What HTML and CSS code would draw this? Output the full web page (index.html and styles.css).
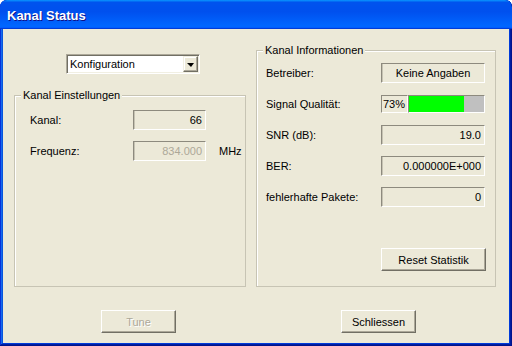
FILE: index.html
```html
<!DOCTYPE html>
<html>
<head>
<meta charset="utf-8">
<title>Kanal Status</title>
<link rel="stylesheet" href="styles.css">
</head>
<body>
<div class="window">
  <div class="titlebar"><span class="title">Kanal Status</span></div>
  <div class="client">
    <div class="main">
      <div class="col-left">
        <div class="combo">
          <span class="combo-text">Konfiguration</span>
          <span class="combo-btn"><span class="arrow"></span></span>
        </div>
        <fieldset class="group">
          <legend>Kanal Einstellungen</legend>
          <div class="rows rows-left">
            <div class="row"><span class="label label-left">Kanal:</span><span class="field field-left num">66</span></div>
            <div class="row"><span class="label label-left">Frequenz:</span><span class="field field-left num disabled">834.000</span><span class="unit">MHz</span></div>
          </div>
        </fieldset>
      </div>
      <fieldset class="group group-right">
        <legend>Kanal Informationen</legend>
        <div class="rows rows-right">
          <div class="row"><span class="label label-right">Betreiber:</span><span class="field field-right center">Keine Angaben</span></div>
          <div class="row"><span class="label label-right">Signal Qualität:</span>
            <span class="signal"><span class="pct">73%</span><span class="bar"><span class="fill" style="width:73%"></span></span></span>
          </div>
          <div class="row"><span class="label label-right">SNR (dB):</span><span class="field field-right num">19.0</span></div>
          <div class="row"><span class="label label-right">BER:</span><span class="field field-right num">0.000000E+000</span></div>
          <div class="row"><span class="label label-right">fehlerhafte Pakete:</span><span class="field field-right num">0</span></div>
        </div>
        <div class="reset-row"><button class="btn btn-reset">Reset Statistik</button></div>
      </fieldset>
    </div>
    <div class="footer">
      <button class="btn btn-tune" disabled>Tune</button>
      <button class="btn btn-close">Schliessen</button>
    </div>
  </div>
</div>
</body>
</html>
```
FILE: styles.css
```css
* { box-sizing: border-box; }
html, body { margin: 0; padding: 0; background: #fff; }
body {
  width: 512px; height: 346px; overflow: hidden;
  font-family: "Liberation Sans", Arial, sans-serif; font-size: 11px; color: #000;
}
.window {
  width: 512px; height: 346px;
  display: flex; flex-direction: column;
  padding: 0 3px 3px;
  background: #0855dd;
  border-radius: 7px 7px 0 0;
  overflow: hidden;
  box-shadow: inset -1px -1px #00138c, inset 1px 1px #0831d9, inset -2px -2px #001ea0,
              inset 2px 2px #166aee, inset -3px -3px #003bda, inset 3px 3px #0855dd;
}
.titlebar {
  flex: none; height: 29px; margin: 0 -3px;
  display: flex; align-items: center; padding: 1px 0 0 7px;
  background: linear-gradient(180deg, #0997ff, #0053ee 8%, #0050ee 40%, #0066ff 88%, #0066ff 93%, #005bff 95%, #003dd7 96%, #003dd7);
  border-radius: 7px 7px 0 0;
}
.title {
  font: bold 13px "Liberation Sans", Arial, sans-serif;
  color: #fff; text-shadow: 1px 1px 0 #0f1089;
}
.client {
  flex: 1; background: #ece9d8;
  padding: 15px 13px 0 11px;
  display: flex; flex-direction: column;
}
.main { flex: none; height: 243px; display: flex; gap: 10px; }
.col-left { width: 232px; display: flex; flex-direction: column; }
.combo {
  margin: 10px 0 0 52px; width: 134px; height: 20px; flex: none;
  display: flex; align-items: center; justify-content: space-between;
  background: #fff;
  border: 1px solid; border-color: #aca899 #fff #fff #aca899;
  box-shadow: inset 1px 1px 0 #716f64, inset -1px -1px 0 #f1efe2;
  padding: 1px 1px 1px 3px;
}
.combo-text { line-height: 14px; }
.combo-btn {
  width: 15px; height: 16px; flex: none;
  background: #ece9d8;
  border: 1px solid; border-color: #f1efe2 #716f64 #716f64 #f1efe2;
  box-shadow: inset -1px -1px 0 #aca899, inset 1px 1px 0 #fff;
  display: flex; align-items: center; justify-content: center;
}
.arrow {
  width: 0; height: 0;
  border-left: 4px solid transparent; border-right: 3px solid transparent;
  border-top: 4px solid #000; margin-top: 1px;
}
.group {
  margin: 15px 0 0; padding: 0; min-width: 0;
  border: 1px solid #c7c4b4;
  box-shadow: inset 1px 1px 0 #fff;
  flex: 1; display: flex; flex-direction: column;
}
.group legend { margin-left: 6px; padding: 0 2px; line-height: 13px; background: #ece9d8; }
.group-right { margin: 0; width: 240px; }
.rows { display: flex; flex-direction: column; gap: 11px; }
.rows-left { padding: 8px 0 0 15px; }
.rows-right { padding: 6px 0 0 9px; }
.row { display: flex; align-items: center; height: 20px; }
.label { flex: none; }
.label-left { width: 103px; }
.label-right { width: 115px; }
.field {
  height: 20px; line-height: 18px; white-space: nowrap;
  border: 1px solid; border-color: #8d8a7e #fff #fff #8d8a7e;
  box-shadow: inset 1px 0 0 #c6c3b3;
}
.field-left { width: 73px; }
.field-right { width: 104px; }
.num { text-align: right; padding-right: 3px; }
.center { text-align: center; }
.disabled { color: #aca899; }
.unit { margin-left: 13px; }
.signal { display: flex; height: 18px; width: 104px; }
.pct {
  width: 27px; line-height: 16px; padding-left: 1px;
  border: 1px solid; border-color: #8d8a7e #fff #fff #8d8a7e;
}
.bar {
  flex: 1; display: flex; background: #c0c0c0;
  border: 1px solid; border-color: #8d8a7e #fff #fff #8d8a7e;
}
.fill { height: 100%; background: #00ff00; }
.reset-row { margin-top: auto; padding: 0 0 15px 124px; display: flex; }
.btn {
  height: 23px; padding: 0;
  font-family: "Liberation Sans", Arial, sans-serif; font-size: 11px; color: #000;
  background: #ece9d8;
  border: 1px solid; border-color: #fff #716f64 #716f64 #fff;
  box-shadow: inset -1px -1px 0 #aca899;
}
.btn-reset { width: 105px; }
.footer { flex: none; margin-top: 23px; display: flex; }
.btn-tune { width: 75px; margin-left: 87px; color: #aca899; text-shadow: 1px 1px 0 #fff; }
.btn-close { width: 75px; margin-left: 165px; }
```
